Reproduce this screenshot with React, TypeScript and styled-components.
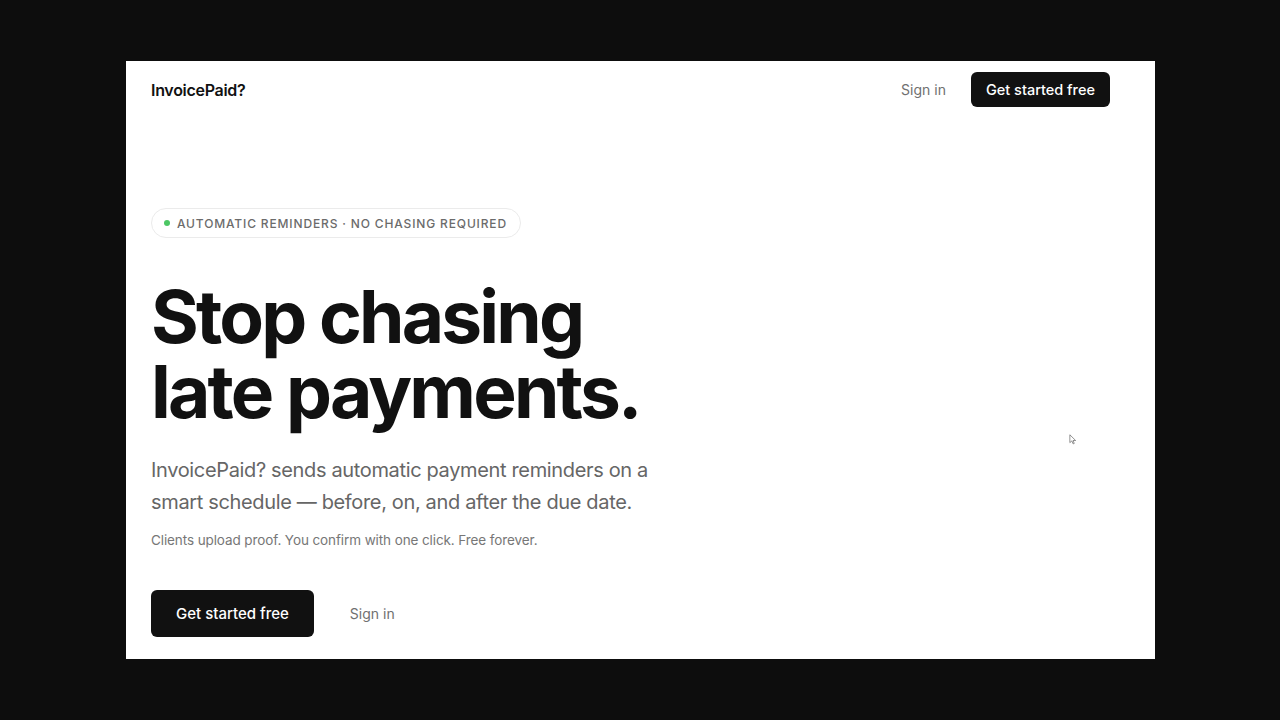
import styled, { createGlobalStyle } from "styled-components";

const GlobalStyle = createGlobalStyle`
  * { box-sizing: border-box; }
  html, body {
    margin: 0;
    padding: 0;
    background: #0d0d0d;
    font-family: Inter, "Noto Sans", sans-serif;
    -webkit-font-smoothing: antialiased;
  }
`;

const App = () => {
  return (
    <>
      <GlobalStyle />
      <Stage>
        <Panel>
          <Nav>
            <Logo>InvoicePaid?</Logo>
            <NavActions>
              <TextLink>Sign in</TextLink>
              <DarkButton size="sm">Get started free</DarkButton>
            </NavActions>
          </Nav>
          <Hero>
            <Badge>
              <Dot />
              Automatic reminders · No chasing required
            </Badge>
            <Headline>
              <Line>Stop chasing</Line>
              <Line>late payments.</Line>
            </Headline>
            <Lead>
              InvoicePaid? sends automatic payment reminders on a smart
              schedule — before, on, and after the due date.
            </Lead>
            <Note>Clients upload proof. You confirm with one click. Free forever.</Note>
            <Actions>
              <DarkButton size="lg">Get started free</DarkButton>
              <TextLink>Sign in</TextLink>
            </Actions>
          </Hero>
          <Cursor viewBox="0 0 10 14" width="8" height="11">
            <path d="M1 1 L1 11 L3.5 8.8 L5.2 12.6 L6.6 12 L5 8.3 L8.4 8.3 Z" fill="#fff" stroke="#666" strokeWidth="0.9" />
          </Cursor>
        </Panel>
      </Stage>
    </>
  );
};

const Stage = styled.div`
  width: 1280px;
  height: 720px;
  padding: 61px 0 0 126px;
`;

const Panel = styled.div`
  position: relative;
  width: 1029px;
  height: 598px;
  background: #ffffff;
  padding: 0 45px 0 25px;
`;

const Nav = styled.nav`
  height: 58px;
  padding-top: 11px;
  display: flex;
  align-items: flex-start;
  justify-content: space-between;
`;

const Logo = styled.div`
  font-size: 16px;
  font-weight: 600;
  color: #111;
  letter-spacing: -0.3px;
  line-height: 36px;
`;

const NavActions = styled.div`
  display: flex;
  align-items: center;
  gap: 25px;
`;

const TextLink = styled.a`
  font-size: 14px;
  color: #707070;
  cursor: pointer;
`;

const DarkButton = styled.button<{ size: "sm" | "lg" }>`
  border: none;
  background: #111111;
  color: #ffffff;
  font-family: inherit;
  font-size: ${(p) => (p.size === "lg" ? "15px" : "14.5px")};
  font-weight: 500;
  border-radius: 6px;
  height: ${(p) => (p.size === "lg" ? "47px" : "35px")};
  padding: ${(p) => (p.size === "lg" ? "0 25px" : "0 15px")};
  cursor: pointer;
`;

const Hero = styled.section`
  padding-top: 89px;
  display: flex;
  flex-direction: column;
  align-items: flex-start;
`;

const Badge = styled.div`
  display: inline-flex;
  align-items: center;
  gap: 7px;
  height: 30px;
  padding: 0 13px 0 12px;
  border: 1px solid #ebebeb;
  border-radius: 999px;
  font-size: 12px;
  font-weight: 500;
  letter-spacing: 0.85px;
  text-transform: uppercase;
  color: #6b6b6b;
`;

const Dot = styled.span`
  width: 6px;
  height: 6px;
  border-radius: 50%;
  background: #4cc764;
`;

const Headline = styled.h1`
  margin: 41px 0 0;
  font-size: 73px;
  font-weight: 700;
  line-height: 75px;
  letter-spacing: -2.8px;
  color: #111;
`;

const Line = styled.span`
  display: block;
  height: 75px;
`;

const Lead = styled.p`
  margin: 25px 0 0;
  width: 510px;
  font-size: 20px;
  line-height: 32px;
  color: #666;
  letter-spacing: -0.35px;
`;

const Note = styled.p`
  margin: 14px 0 0;
  font-size: 13.5px;
  color: #777;
  letter-spacing: -0.1px;
`;

const Actions = styled.div`
  margin-top: 42px;
  display: flex;
  align-items: center;
  gap: 36px;
`;

const Cursor = styled.svg`
  position: absolute;
  left: 943px;
  top: 373px;
`;

export default App;
